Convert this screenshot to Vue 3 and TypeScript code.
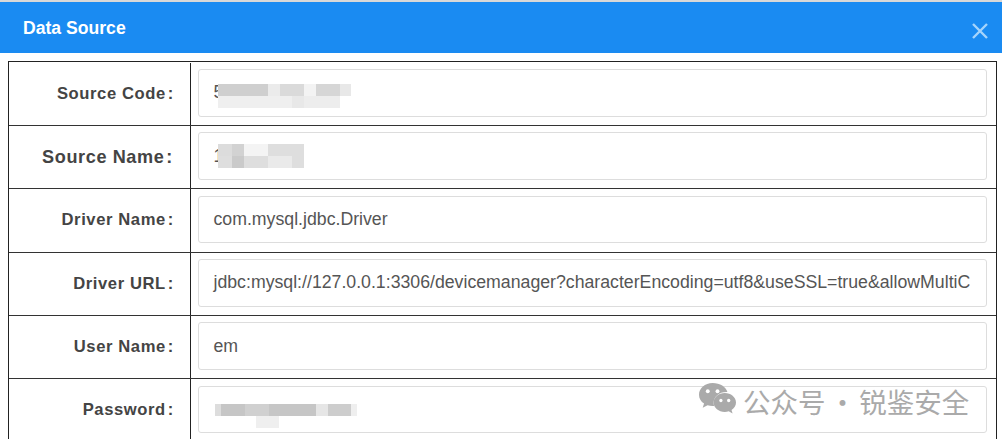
<script setup lang="ts">
interface Blur { x: number; y: number; w: number; h: number; c: string }
interface Row { label: string; value: string; wide?: boolean; blurs: Blur[] }

const rows: Row[] = [
  {
    label: 'Source Code',
    value: '5',
    blurs: [
      { x: 19, y: 14, w: 50, h: 12, c: '#cfcfcf' },
      { x: 69, y: 14, w: 12, h: 12, c: '#ebebeb' },
      { x: 81, y: 14, w: 24, h: 12, c: '#dadada' },
      { x: 105, y: 14, w: 12, h: 12, c: '#f3f3f3' },
      { x: 117, y: 14, w: 24, h: 12, c: '#d6d6d6' },
      { x: 141, y: 14, w: 11, h: 12, c: '#e8e8e8' },
      { x: 19, y: 26, w: 74, h: 12, c: '#efefef' },
      { x: 93, y: 26, w: 12, h: 12, c: '#e8e8e8' },
      { x: 105, y: 26, w: 36, h: 12, c: '#ededed' },
    ],
  },
  {
    label: 'Source Name',
    value: '1',
    wide: true,
    blurs: [
      { x: 19, y: 11, w: 14, h: 12, c: '#dcdcdc' },
      { x: 33, y: 11, w: 12, h: 12, c: '#d2d2d2' },
      { x: 45, y: 11, w: 24, h: 12, c: '#f4f4f4' },
      { x: 69, y: 11, w: 36, h: 12, c: '#dedede' },
      { x: 19, y: 23, w: 14, h: 12, c: '#dedede' },
      { x: 33, y: 23, w: 12, h: 12, c: '#cacaca' },
      { x: 45, y: 23, w: 24, h: 12, c: '#dedede' },
      { x: 69, y: 23, w: 24, h: 12, c: '#eaeaea' },
      { x: 93, y: 23, w: 12, h: 12, c: '#dedede' },
    ],
  },
  { label: 'Driver Name', value: 'com.mysql.jdbc.Driver', blurs: [] },
  {
    label: 'Driver URL',
    value: 'jdbc:mysql://127.0.0.1:3306/devicemanager?characterEncoding=utf8&useSSL=true&allowMultiC',
    blurs: [],
  },
  { label: 'User Name', value: 'em', blurs: [] },
  {
    label: 'Password',
    value: '',
    blurs: [
      { x: 16, y: 17, w: 6, h: 12, c: '#dddddd' },
      { x: 22, y: 17, w: 24, h: 12, c: '#c6c6c6' },
      { x: 46, y: 17, w: 24, h: 12, c: '#d0d0d0' },
      { x: 70, y: 17, w: 47, h: 12, c: '#c6c6c6' },
      { x: 117, y: 17, w: 12, h: 12, c: '#e6e6e6' },
      { x: 129, y: 17, w: 23, h: 12, c: '#cdcdcd' },
      { x: 152, y: 17, w: 6, h: 12, c: '#efefef' },
      { x: 57, y: 29, w: 23, h: 12, c: '#efefef' },
    ],
  },
]

function blurStyle(b: Blur) {
  return { left: `${b.x}px`, top: `${b.y}px`, width: `${b.w}px`, height: `${b.h}px`, background: b.c }
}
</script>

<template>
  <div class="page">
    <header class="head">
      <h1 class="title">Data Source</h1>
      <svg class="close" viewBox="0 0 16 16" width="16" height="16" aria-label="close">
        <path d="M1 1 L15 15 M15 1 L1 15" stroke="#a5d4fb" stroke-width="2.4" fill="none" />
      </svg>
    </header>
    <div class="body">
      <div class="table">
        <div v-for="r in rows" :key="r.label" class="row">
          <div class="label" :class="{ wide: r.wide }">{{ r.label }}<span class="colon">:</span></div>
          <div class="cell">
            <div class="input">
              <span class="value">{{ r.value }}</span>
              <i v-for="(b, i) in r.blurs" :key="i" class="blur" :style="blurStyle(b)"></i>
            </div>
          </div>
        </div>
      </div>
    </div>
    <div class="mark">
      <svg class="wechat" viewBox="0 0 40 38" width="39" height="37">
        <path d="M15 1C7 1 1 6.400 1 13c0 3.800 2 7 5.200 9.200L4.800 26.500l5-2.600c1.600.5 3.300.8 5.200.8.500 0 1 0 1.500-.1-.3-1-.5-2.100-.5-3.100 0-6.200 5.700-11.200 13-11.200h1.200C28.900 5 22.500 1 15 1z" fill="#aaa" />
        <path d="M39 21c0-5.400-5.300-9.700-11.500-9.700S16 15.600 16 21s5.200 9.700 11.500 9.700c1.400 0 2.800-.2 4-.6l4 2.300-1.100-3.600C37.200 27 39 24.200 39 21z" fill="#aaa" />
        <circle cx="10" cy="9.500" r="2" fill="#fff" />
        <circle cx="20" cy="9.500" r="2" fill="#fff" />
        <circle cx="23.500" cy="19" r="1.700" fill="#fff" />
        <circle cx="31.500" cy="19" r="1.700" fill="#fff" />
      </svg>
      <span class="mark-text">公众号 · 锐鉴安全</span>
    </div>
  </div>
</template>

<style>
html, body { margin: 0; background: #fff; }
</style>

<style scoped>
.page {
  position: relative;
  width: 1002px;
  height: 439px;
  overflow: hidden;
  background: #fff;
  border-top: 2px solid #d8d8d8;
  box-sizing: border-box;
  font-family: "Liberation Sans", Arial, sans-serif;
}
.head {
  height: 51px;
  background: #1a8bf2;
  display: flex;
  align-items: center;
  justify-content: space-between;
  padding: 0 14px 0 23px;
}
.title {
  margin: 0;
  font-size: 17.6px;
  font-weight: 700;
  color: #fff;
  position: relative;
  top: 1px;
}
.close { position: relative; top: 3px; }
.body { padding: 8px 5px 0 8px; }
.table {
  border: 1px solid #222;
  border-bottom: 0;
  padding-top: 0.7px;
}
.row {
  display: flex;
  height: 63.3px;
  box-sizing: border-box;
  border-bottom: 1px solid #333;
}
.label {
  width: 182px;
  flex: none;
  box-sizing: border-box;
  border-right: 1px solid #222;
  display: flex;
  align-items: center;
  justify-content: flex-end;
  padding: 0 16px 0 0;
  font-size: 16.6px;
  font-weight: 700;
  letter-spacing: 0.6px;
  color: #444;
}
.label.wide {
  font-size: 18.1px;
  letter-spacing: 0.6px;
  padding-right: 17px;
}
.colon { margin-left: 2px; }
.cell {
  flex: 1;
  min-width: 0;
  padding: 6.5px 9px 0 7px;
}
.input {
  position: relative;
  height: 47.5px;
  box-sizing: border-box;
  border: 1px solid #ddd;
  border-radius: 3px;
  padding: 0 15px 0 14.5px;
  display: flex;
  align-items: center;
  overflow: hidden;
  font-size: 17.72px;
  color: #555;
  white-space: nowrap;
}
.value { display: block; }
.blur { position: absolute; display: block; filter: blur(0.6px); }
.mark {
  position: absolute;
  left: 698px;
  top: 380px;
  display: flex;
  align-items: center;
  gap: 6px;
}
.mark-text {
  font-family: "Noto Sans CJK SC", sans-serif;
  font-size: 27.5px;
  line-height: 36px;
  color: #aaa;
  white-space: nowrap;
  word-spacing: -3px;
}
</style>
